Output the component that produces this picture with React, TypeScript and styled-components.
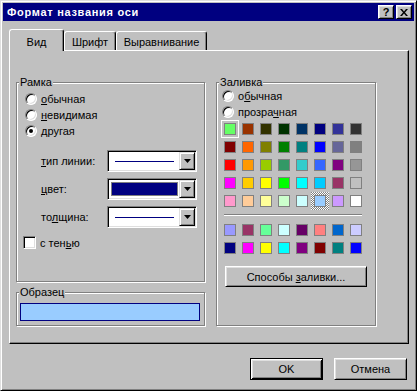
import styled, { createGlobalStyle } from 'styled-components';

const BASE_COLORS = [
  ['#66ff66', '#993300', '#333300', '#003300', '#003366', '#000080', '#333399', '#333333'],
  ['#800000', '#ff6600', '#808000', '#008000', '#008080', '#0000ff', '#666699', '#808080'],
  ['#ff0000', '#ff9900', '#99cc00', '#339966', '#33cccc', '#3366ff', '#800080', '#969696'],
  ['#ff00ff', '#ffcc00', '#ffff00', '#00ff00', '#00ffff', '#00ccff', '#993366', '#c0c0c0'],
  ['#ff99cc', '#ffcc99', '#ffff99', '#ccffcc', '#ccffff', '#99ccff', '#cc99ff', '#ffffff'],
];

const CHART_COLORS = [
  ['#9999ff', '#993366', '#66ff99', '#ccffff', '#660066', '#ff8080', '#0066cc', '#ccccff'],
  ['#000080', '#ff00ff', '#ffff00', '#00ffff', '#800080', '#800000', '#008080', '#0000ff'],
];

type CellState = 'current' | 'focus' | 'none';

function cellState(row: number, col: number): CellState {
  if (row === 0 && col === 0) return 'current';
  if (row === 4 && col === 5) return 'focus';
  return 'none';
}

function Radio({ checked = false, children }: { checked?: boolean; children: React.ReactNode }) {
  return (
    <RadioRow>
      <RadioCircle $checked={checked} />
      <span>{children}</span>
    </RadioRow>
  );
}

function Combo({ kind }: { kind: 'line' | 'fill' }) {
  return (
    <ComboBox>
      <ComboField>{kind === 'line' ? <LineSample /> : <FillSample />}</ComboField>
      <DropButton>
        <svg width="7" height="4" viewBox="0 0 7 4">
          <path d="M0 0h7L3.5 4z" fill="#000" />
        </svg>
      </DropButton>
    </ComboBox>
  );
}

export default function App() {
  return (
    <>
      <GlobalStyle />
      <Window>
        <TitleBar>
          <Title>Формат названия оси</Title>
          <TitleButton>?</TitleButton>
          <TitleButton>
            <svg width="8" height="7" viewBox="0 0 8 7">
              <path d="M0 0h2l2 2.5L6 0h2L5 3.5 8 7H6L4 4.5 2 7H0l3-3.5z" fill="#000" />
            </svg>
          </TitleButton>
        </TitleBar>

        <TabRow>
          <Tab $active $w={55}>Вид</Tab>
          <Tab $w={52}>Шрифт</Tab>
          <Tab $w={91}>Выравнивание</Tab>
        </TabRow>

        <Panel>
          <Column>
            <Group $h={200}>
              <Legend>Рамка</Legend>
              <RadioList $inset={8}>
                <Radio><Key>о</Key>бычная</Radio>
                <Radio><Key>н</Key>евидимая</Radio>
                <Radio checked>другая</Radio>
              </RadioList>
              <ComboGrid>
                <ComboLabel><Key>т</Key>ип линии:</ComboLabel>
                <Combo kind="line" />
                <ComboLabel><Key>ц</Key>вет:</ComboLabel>
                <Combo kind="fill" />
                <ComboLabel>то<Key>л</Key>щина:</ComboLabel>
                <Combo kind="line" />
              </ComboGrid>
              <CheckRow>
                <CheckBox />
                <span>с тен<Key>ь</Key>ю</span>
              </CheckRow>
            </Group>

            <Group $h={34}>
              <Legend>Образец</Legend>
              <Preview />
            </Group>
          </Column>

          <Group $h={244}>
            <Legend>Заливка</Legend>
            <RadioList $inset={5} $top={5}>
              <Radio>о<Key>б</Key>ычная</Radio>
              <Radio>прозра<Key>ч</Key>ная</Radio>
            </RadioList>
            <Palette>
              {BASE_COLORS.map((row, r) =>
                row.map((c, i) => (
                  <Cell key={`b${r}-${i}`} $state={cellState(r, i)}>
                    <Swatch $color={c} />
                  </Cell>
                )),
              )}
            </Palette>
            <Separator />
            <Palette>
              {CHART_COLORS.map((row, r) =>
                row.map((c, i) => (
                  <Cell key={`c${r}-${i}`} $state="none">
                    <Swatch $color={c} />
                  </Cell>
                )),
              )}
            </Palette>
            <FillButton>
              <span>Способы <Key>з</Key>аливки...</span>
            </FillButton>
          </Group>
        </Panel>

        <ButtonRow>
          <DialogButton $default>OK</DialogButton>
          <DialogButton>Отмена</DialogButton>
        </ButtonRow>
      </Window>
    </>
  );
}

/* ---- styled ---- */

const GlobalStyle = createGlobalStyle`
  html, body {
    margin: 0;
    padding: 0;
    background: #c0c0c0;
  }
  body {
    font-family: 'Liberation Sans', Arial, sans-serif;
    font-size: 11px;
    color: #000;
  }
`;

const raised = `
  border: 1px solid;
  border-color: #fff #000 #000 #fff;
  box-shadow: inset 1px 1px #dfdfdf, inset -1px -1px #808080;
`;

const sunken = `
  border: 1px solid;
  border-color: #808080 #fff #fff #808080;
  box-shadow: inset 1px 1px #000, inset -1px -1px #dfdfdf;
`;

const Window = styled.div`
  width: 417px;
  height: 391px;
  box-sizing: border-box;
  background: #c0c0c0;
  border: 1px solid;
  border-color: #dfdfdf #000 #000 #dfdfdf;
  box-shadow: inset 1px 1px #fff, inset -1px -1px #808080;
  padding: 2px;
  display: flex;
  flex-direction: column;
`;

const TitleBar = styled.div`
  height: 18px;
  background: #000080;
  display: flex;
  align-items: center;
  gap: 2px;
  padding: 0 2px 0 4px;
`;

const Title = styled.div`
  flex: 1;
  color: #fff;
  font-weight: bold;
  font-size: 11px;
  letter-spacing: 0.7px;
`;

const TitleButton = styled.div`
  width: 16px;
  height: 14px;
  box-sizing: border-box;
  background: #c0c0c0;
  display: flex;
  align-items: center;
  justify-content: center;
  font-weight: bold;
  font-size: 11px;
  ${raised}
`;

const TabRow = styled.div`
  display: flex;
  align-items: flex-end;
  height: 21px;
  margin: 8px 0 0 6px;
`;

const Tab = styled.div<{ $active?: boolean; $w: number }>`
  position: relative;
  z-index: ${(p) => (p.$active ? 1 : 0)};
  width: ${(p) => p.$w}px;
  height: ${(p) => (p.$active ? 22 : 19)}px;
  margin-bottom: ${(p) => (p.$active ? -1 : 0)}px;
  box-sizing: border-box;
  background: #c0c0c0;
  border: 1px solid;
  border-bottom: none;
  border-color: #fff #000 #000 #fff;
  border-radius: 3px 3px 0 0;
  box-shadow: inset -1px 0 #808080;
  display: flex;
  align-items: center;
  justify-content: center;
  padding-top: 2px;
`;

const Panel = styled.div`
  width: 400px;
  height: 294px;
  margin-left: 6px;
  box-sizing: border-box;
  border: 1px solid;
  border-color: #fff #000 #000 #fff;
  box-shadow: inset -1px -1px #808080;
  padding: 31px 0 0 6px;
  display: grid;
  grid-template-columns: 189px 160px;
  column-gap: 11px;
  align-items: start;
`;

const Column = styled.div`
  display: flex;
  flex-direction: column;
  gap: 10px;
`;

const Group = styled.div<{ $h: number }>`
  position: relative;
  height: ${(p) => p.$h}px;
  box-sizing: border-box;
  border: 1px solid #808080;
  box-shadow: inset 1px 1px #fff, 1px 1px #fff;
  display: flex;
  flex-direction: column;
`;

const Legend = styled.span`
  position: absolute;
  top: -7px;
  left: 2px;
  padding: 0 1px;
  line-height: 13px;
  background: #c0c0c0;
`;

const Key = styled.span`
  text-decoration: underline;
  text-underline-offset: 1px;
`;

const RadioList = styled.div<{ $inset: number; $top?: number }>`
  display: flex;
  flex-direction: column;
  padding: ${(p) => p.$top ?? 8}px 0 0 ${(p) => p.$inset}px;
`;

const RadioRow = styled.div`
  height: 16px;
  display: flex;
  align-items: center;
  gap: 4px;
`;

const RadioCircle = styled.span<{ $checked: boolean }>`
  position: relative;
  width: 12px;
  height: 12px;
  box-sizing: border-box;
  border-radius: 50%;
  background: #fff;
  border: 1px solid;
  border-color: #808080 #fff #fff #808080;
  box-shadow: inset 1px 1px #000, inset -1px -1px #dfdfdf;

  &::after {
    content: '';
    display: ${(p) => (p.$checked ? 'block' : 'none')};
    position: absolute;
    left: 3px;
    top: 3px;
    width: 4px;
    height: 4px;
    border-radius: 50%;
    background: #000;
  }
`;

const ComboGrid = styled.div`
  display: grid;
  grid-template-columns: 66px 90px;
  row-gap: 6px;
  align-items: center;
  margin: 11px 0 0 24px;
`;

const ComboLabel = styled.span``;

const ComboBox = styled.div`
  width: 90px;
  height: 22px;
  box-sizing: border-box;
  background: #fff;
  padding: 1px;
  display: flex;
  ${sunken}
`;

const ComboField = styled.div`
  flex: 1;
  display: flex;
  align-items: center;
  padding: 0 1px 0 2px;
`;

const LineSample = styled.div`
  flex: 1;
  height: 1px;
  margin: 0 4px;
  background: #000080;
`;

const FillSample = styled.div`
  flex: 1;
  height: 14px;
  box-sizing: border-box;
  background: #000080;
  border: 1px solid #808080;
`;

const DropButton = styled.div`
  width: 16px;
  height: 18px;
  box-sizing: border-box;
  background: #c0c0c0;
  display: flex;
  align-items: center;
  justify-content: center;
  border: 1px solid;
  border-color: #dfdfdf #000 #000 #dfdfdf;
  box-shadow: inset 1px 1px #fff, inset -1px -1px #808080;
`;

const CheckRow = styled.div`
  display: flex;
  align-items: center;
  gap: 4px;
  margin: 8px 0 0 6px;
  height: 13px;
`;

const CheckBox = styled.span`
  width: 13px;
  height: 13px;
  box-sizing: border-box;
  background: #fff;
  ${sunken}
`;

const Preview = styled.div`
  width: 180px;
  height: 18px;
  box-sizing: border-box;
  margin: 10px 0 0 3px;
  background: #99ccff;
  border: 1px solid #000080;
`;

const Palette = styled.div`
  display: grid;
  grid-template-columns: repeat(8, 18px);
  grid-auto-rows: 18px;
  margin-left: 4px;
  &:first-of-type {
    margin-top: 7px;
  }
`;

const Cell = styled.div<{ $state: CellState }>`
  display: flex;
  align-items: center;
  justify-content: center;
  box-sizing: border-box;
  border: ${(p) => (p.$state === 'current' ? '1px solid #fff' : 'none')};
  background: ${(p) =>
    p.$state === 'focus'
      ? 'repeating-conic-gradient(#fff 0 25%, #808080 0 50%) 0 0 / 2px 2px'
      : 'transparent'};
`;

const Swatch = styled.div<{ $color: string }>`
  width: 12px;
  height: 12px;
  box-sizing: border-box;
  border: 1px solid #808080;
  background: ${(p) => p.$color};
`;

const Separator = styled.div`
  width: 138px;
  height: 0;
  margin: 4px 0 5px 7px;
  border-top: 1px solid #808080;
  border-bottom: 1px solid #fff;
`;

const FillButton = styled.div`
  width: 142px;
  height: 21px;
  box-sizing: border-box;
  margin: 9px 0 0 8px;
  background: #c0c0c0;
  display: flex;
  align-items: center;
  justify-content: center;
  ${raised}
`;

const ButtonRow = styled.div`
  display: flex;
  justify-content: flex-end;
  gap: 11px;
  margin-top: 14px;
  padding-right: 7px;
`;

const DialogButton = styled.div<{ $default?: boolean }>`
  width: 73px;
  height: 22px;
  box-sizing: border-box;
  background: #c0c0c0;
  display: flex;
  align-items: center;
  justify-content: center;
  border: 1px solid;
  border-color: ${(p) => (p.$default ? '#000' : '#fff #000 #000 #fff')};
  box-shadow: ${(p) =>
    p.$default
      ? 'inset 1px 1px #fff, inset -1px -1px #000, inset 2px 2px #dfdfdf, inset -2px -2px #808080'
      : 'inset 1px 1px #dfdfdf, inset -1px -1px #808080'};
`;
